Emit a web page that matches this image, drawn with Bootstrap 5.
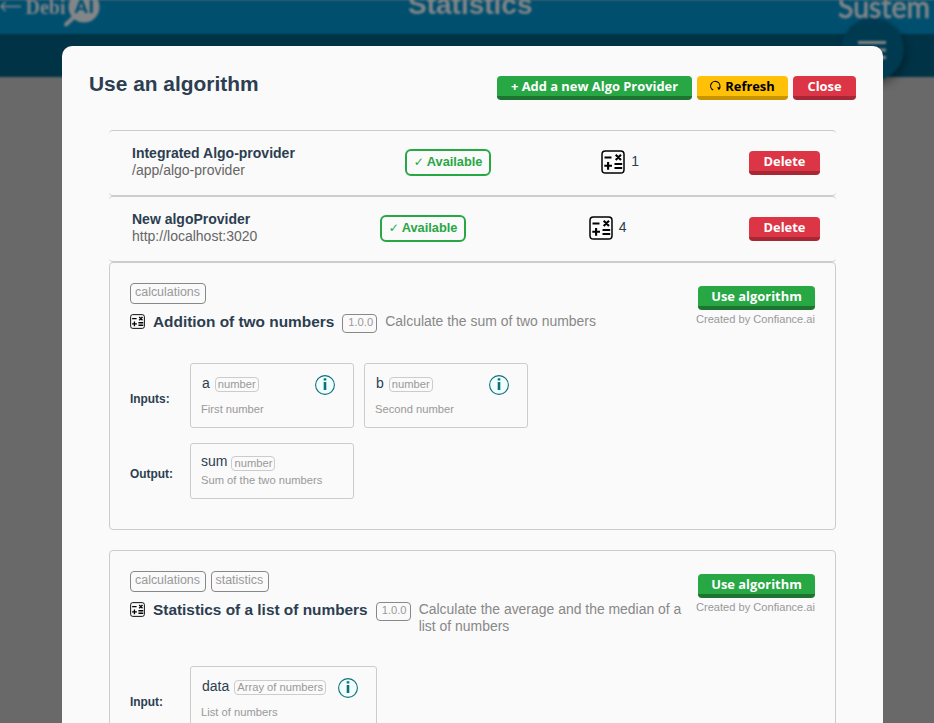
<!DOCTYPE html>
<html lang="en">
<head>
<meta charset="utf-8">
<meta name="viewport" content="width=device-width, initial-scale=1">
<title>DebiAI - Statistics</title>
<link href="https://cdn.jsdelivr.net/npm/bootstrap@5.3.0/dist/css/bootstrap.min.css" rel="stylesheet">
<style>
body{font:14px/17px "Liberation Sans",Arial,sans-serif;color:#2c3e50;background:#696969;height:723px;overflow:hidden}
.page-back{filter:blur(.8px);margin:0 -6px;padding:0 6px}
.top-bar{height:34px;background:#004f6f;margin:0 -6px;padding:0 6px}
.sub-bar{height:43px;background:#003346;margin:0 -6px}
.top-bar svg{overflow:visible}
.page-title{font-size:28px;line-height:28px;font-weight:700;color:#838688;margin-top:-9px;margin-left:308px;white-space:nowrap}
.menu-fab{position:absolute;left:847px;top:18px;width:63px;height:63px;border-radius:50%;background:#003a50;box-shadow:2px 4px 8px rgba(0,0,0,.35)}
.dialog-box{position:absolute;left:62px;top:46px;width:821px;height:677px;overflow:hidden;background:#fafafa;border-radius:10px 10px 0 0;padding:26px 27px 0}
.dialog-head{height:58px}
.dialog-head h1{font-size:20.9px;line-height:23px;font-weight:700;margin:0;color:#2c3e50}
.dialog-list{width:727px}
.gap-5px{gap:5px}.gap-10px{gap:10px}
.act{border:0;border-bottom:4px solid;border-radius:4px;height:24px;padding:0;font:700 12.9px/20px "Open Sans","Noto Sans",sans-serif;color:#fff;white-space:nowrap;display:flex;align-items:center;justify-content:center}
.act-green{background:#28a745;border-color:#1c7430}
.act-yellow{background:#ffc107;border-color:#c69500;color:#000}
.act-red{background:#dc3545;border-color:#a72834}
.w-add{width:195px}.w-refresh{width:91px}.w-close{width:63px}.w-del{width:71px}.w-use{width:117px;margin-top:3px}
.provider{height:66px;border:solid #ccc;border-width:1px 0;border-radius:4px;padding:0 16px 0 23px}
.provider-text{margin-top:-2px}
.url{color:#666}
.avail{border:2px solid #28a745;border-radius:6px;color:#28a745;font-weight:700;font-size:12.8px;line-height:17px;height:27px;padding:2px 7px 4px;margin-top:-1px;white-space:nowrap}
.avail i{font:400 12px/15px "DejaVu Sans",sans-serif;margin-right:3px}
.algo-count{margin-top:-2px}
.algo-count span{margin-top:-2px;padding-left:2px}
.algo{border:1px solid #ccc;border-radius:4px;padding:20px;margin-bottom:20px;height:268px}
.algo-top{height:80px}
.algo-top-tall{height:95px}
.tags{margin-bottom:10px}
.tag{border:1px solid #888;border-radius:4px;color:#999;font-size:12.45px;line-height:15px;height:21px;padding:1px 4.5px 0 4px}
.algo-name{font-size:15.4px;font-weight:700;line-height:18px;white-space:nowrap;margin:-1px 8px 0}
.ver{border:1px solid #888;border-radius:4px;color:#999;font-size:11.2px;line-height:14px;height:19px;padding:0 4px 0 5px;width:35px;flex:none}
.desc{color:#888;font-size:13.95px;margin-left:8px;margin-top:-1px}
.made{color:#999;font-size:11.1px;line-height:14px;margin-top:2px;white-space:nowrap}
.io{margin-bottom:15px}
.io-label{font-size:11.9px;font-weight:700;width:60px;flex:none;padding-top:7px}
.param{border:1px solid #ccc;border-radius:3px;width:164px;height:65px;padding:10px 18px 0 10px}
.param.out{height:56px;padding-top:9px}
.param.wide{width:187px}
.param-head{height:29px}
.out .param-head{height:21px}
.pname{margin:1px 0 0 1px}
.out .pname{margin:0}
.ptype{border:1px solid #ccc;border-radius:4px;color:#999;font-size:11.2px;line-height:12px;height:15px;padding:0 2px;margin-left:5px;margin-top:3px;white-space:nowrap}
.out .ptype{margin-left:4px}
.info-icon{margin-top:1px}
.pdesc{color:#999;font-size:11.2px;line-height:13px}
</style>
</head>
<body>
<svg width="0" height="0" class="position-absolute"><defs>
<symbol id="calc" viewBox="0 0 24 24"><rect x="1" y="1" width="22" height="22" rx="3.3" fill="none" stroke="#000" stroke-width="1.5"/><g stroke="#000" stroke-width="2.1" fill="none"><path d="M3.500 7.500h7M3.300 15.800h7.700M7.100 12v7.700M13.500 14h7.700M13.500 18h7.700M14.700 4.800l5.300 5.300M20 4.800L14.700 10.100"/></g></symbol>
<symbol id="info" viewBox="0 0 20 20"><circle cx="10" cy="10" r="9.4" fill="#f0ffff" stroke="#0f6f7c" stroke-width="1.1"/><path d="M8.700 3.300h2.600v2.300H8.700zM8.700 7h2.600v8H8.700z" fill="#0f6f7c"/></symbol>
</defs></svg>

<div class="page-back">
  <header class="top-bar d-flex">
    <svg width="100" height="34" viewBox="0 0 100 34">
      <g fill="#838688" stroke="#838688">
        <path d="M1 6.500h20M5.500 2L1 6.500 5.500 11" fill="none" stroke-width="1.500"/>
        <circle cx="84" cy="7" r="15.500" stroke="none"/>
        <path d="M74 17L66 24.500" stroke-width="4" stroke-linecap="round"/>
      </g>
      <text x="25.500" y="14" font-family="Liberation Serif, serif" font-weight="700" font-size="20" fill="#838688" textLength="40" lengthAdjust="spacingAndGlyphs">Debi</text>
      <text x="74" y="13" font-family="Liberation Sans, sans-serif" font-weight="700" font-size="19" fill="#004f6f" textLength="20" lengthAdjust="spacingAndGlyphs">AI</text>
    </svg>
    <div class="page-title">Statistics</div>
  </header>
  <div class="sub-bar"></div>
  <div class="menu-fab"><svg width="63" height="63"><path d="M17 24.500h28M17 32h28M17 39.500h28" stroke="#838688" stroke-width="3"/></svg></div>
  <svg class="position-absolute top-0 start-0" width="946" height="34"><text x="844" y="17.500" font-family="Lato, sans-serif" font-size="31" font-weight="500" fill="#838688" stroke="#838688" stroke-width=".6" textLength="92" lengthAdjust="spacingAndGlyphs">Sustem</text></svg>
</div>

<main class="dialog-box">
  <div class="dialog-head d-flex justify-content-between align-items-start">
    <h1>Use an algorithm</h1>
    <div class="d-flex gap-5px pt-1">
      <button class="act act-green w-add">+ Add a new Algo Provider</button>
      <button class="act act-yellow w-refresh"><svg class="me-1" width="11" height="12" viewBox="0 0 11 12"><path d="M3.200 10.100A4.600 4.600 0 1 1 9.600 7.600" fill="none" stroke="#000" stroke-width="1.100"/><path d="M7 7.300l3.800.2-1.900 2.700z"/></svg>Refresh</button>
      <button class="act act-red w-close">Close</button>
    </div>
  </div>

  <div class="dialog-list mx-auto">
    <div class="provider d-flex justify-content-between align-items-center">
      <div class="provider-text"><div class="fw-bold">Integrated Algo-provider</div><div class="url">/app/algo-provider</div></div>
      <div class="avail"><i>✓</i>Available</div>
      <div class="algo-count d-flex align-items-center"><svg class="me-1" width="24" height="24"><use href="#calc"/></svg><span>1</span></div>
      <button class="act act-red w-del">Delete</button>
    </div>
    <div class="provider d-flex justify-content-between align-items-center">
      <div class="provider-text"><div class="fw-bold">New algoProvider</div><div class="url">http://localhost:3020</div></div>
      <div class="avail"><i>✓</i>Available</div>
      <div class="algo-count d-flex align-items-center"><svg class="me-1" width="24" height="24"><use href="#calc"/></svg><span>4</span></div>
      <button class="act act-red w-del">Delete</button>
    </div>

    <section class="algo">
      <div class="algo-top d-flex justify-content-between">
        <div>
          <div class="tags d-flex gap-5px"><span class="tag">calculations</span></div>
          <div class="d-flex align-items-start"><svg class="flex-shrink-0" width="15" height="15"><use href="#calc"/></svg><span class="algo-name">Addition of two numbers</span><span class="ver">1.0.0</span><span class="desc">Calculate the sum of two numbers</span></div>
        </div>
        <div class="d-flex flex-column align-items-end"><button class="act act-green w-use">Use algorithm</button><div class="made">Created by Confiance.ai</div></div>
      </div>
      <div class="io d-flex align-items-center"><span class="io-label">Inputs:</span>
        <div class="d-flex gap-10px">
          <div class="param"><div class="param-head d-flex align-items-start"><span class="pname">a</span><span class="ptype">number</span><svg class="info-icon ms-auto" width="20" height="20"><use href="#info"/></svg></div><div class="pdesc">First number</div></div>
          <div class="param"><div class="param-head d-flex align-items-start"><span class="pname">b</span><span class="ptype">number</span><svg class="info-icon ms-auto" width="20" height="20"><use href="#info"/></svg></div><div class="pdesc">Second number</div></div>
        </div>
      </div>
      <div class="d-flex align-items-center"><span class="io-label">Output:</span>
        <div class="param out"><div class="param-head d-flex align-items-start"><span class="pname">sum</span><span class="ptype">number</span></div><div class="pdesc">Sum of the two numbers</div></div>
      </div>
    </section>

    <section class="algo">
      <div class="algo-top-tall d-flex justify-content-between">
        <div>
          <div class="tags d-flex gap-5px"><span class="tag">calculations</span><span class="tag">statistics</span></div>
          <div class="d-flex align-items-start"><svg class="flex-shrink-0" width="15" height="15"><use href="#calc"/></svg><span class="algo-name">Statistics of a list of numbers</span><span class="ver">1.0.0</span><span class="desc">Calculate the average and the median of a list of numbers</span></div>
        </div>
        <div class="d-flex flex-column align-items-end"><button class="act act-green w-use">Use algorithm</button><div class="made">Created by Confiance.ai</div></div>
      </div>
      <div class="io d-flex align-items-center"><span class="io-label">Input:</span>
        <div class="param wide"><div class="param-head d-flex align-items-start"><span class="pname">data</span><span class="ptype">Array of numbers</span><svg class="info-icon ms-auto" width="20" height="20"><use href="#info"/></svg></div><div class="pdesc">List of numbers</div></div>
      </div>
    </section>
  </div>
</main>
<script src="https://cdn.jsdelivr.net/npm/bootstrap@5.3.0/dist/js/bootstrap.bundle.min.js"></script>
</body>
</html>
